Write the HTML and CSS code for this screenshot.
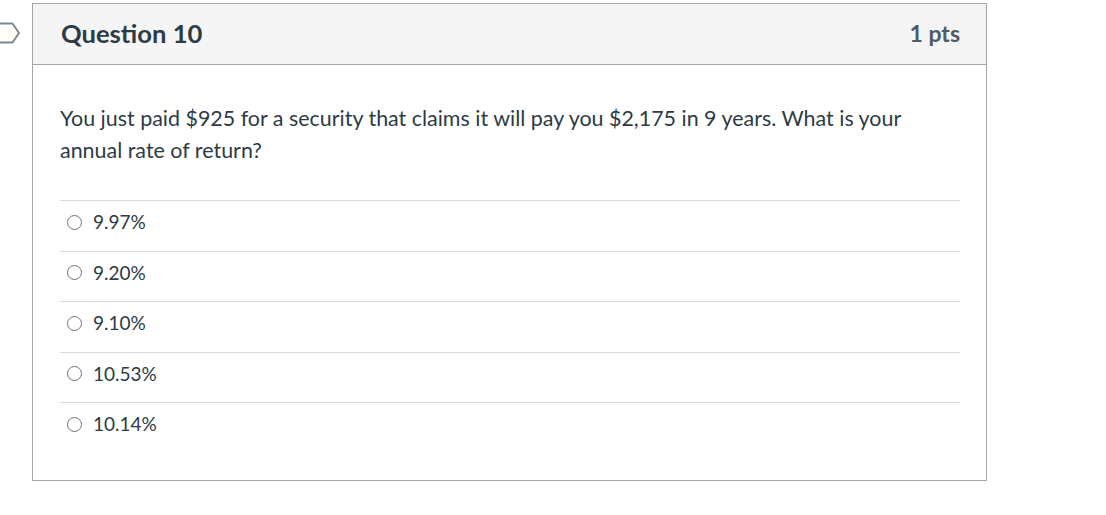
FILE: index.html
```html
<!DOCTYPE html>
<html>
<head>
<meta charset="utf-8">
<link rel="stylesheet" href="styles.css">
</head>
<body>
<div class="page">
  <svg class="flag" width="22" height="24" viewBox="0 0 22 24">
    <path d="M-4 2.5 H12.5 L19 12 L12.5 21.5 H-4" fill="#fffdf5" stroke="#7b8a92" stroke-width="2" stroke-linejoin="round"/>
  </svg>
  <div class="card">
    <div class="header">
      <h2 class="title">Question 10</h2>
      <span class="pts">1 pts</span>
    </div>
    <div class="body">
      <p class="question">You just paid $925 for a security that claims it will pay you $2,175 in 9 years. What is your annual rate of return?</p>
      <div class="answers">
        <label class="answer"><span class="radio"></span><span>9.97%</span></label>
        <label class="answer"><span class="radio"></span><span>9.20%</span></label>
        <label class="answer"><span class="radio"></span><span>9.10%</span></label>
        <label class="answer"><span class="radio"></span><span>10.53%</span></label>
        <label class="answer"><span class="radio"></span><span>10.14%</span></label>
      </div>
    </div>
  </div>
</div>
</body>
</html>
```
FILE: styles.css
```css
html, body {
  margin: 0;
  padding: 0;
  background: #fff;
}
body {
  font-family: Lato, "Liberation Sans", sans-serif;
  color: #2d3b45;
}
.page {
  position: relative;
  padding: 3px 0 0 32px;
}
.flag {
  position: absolute;
  left: 0;
  top: 21px;
}
.card {
  box-sizing: border-box;
  width: 955px;
  border: 1px solid #a5a5a5;
}
.header {
  display: flex;
  justify-content: space-between;
  align-items: center;
  background: #f5f5f5;
  border-bottom: 1px solid #a5a5a5;
  box-sizing: border-box;
  height: 61px;
  padding: 0 26px 2px 28px;
}
.title {
  margin: 0;
  font-size: 25.6px;
  font-weight: 700;
  color: #2d3b45;
}
.pts {
  font-size: 23px;
  font-weight: 700;
  color: #4f5b63;
}
.body {
  padding: 37px 26px 27px 27px;
}
.question {
  margin: 0;
  font-size: 21.45px;
  line-height: 32px;
  max-width: 870px;
}
.answers {
  margin-top: 34px;
}
.answer {
  display: flex;
  align-items: center;
  gap: 11px;
  border-top: 1px solid #dadada;
  padding: 11px 0 18.5px 7px;
  line-height: 20px;
  font-size: 19px;
  color: #2d3b45;
}
.radio {
  box-sizing: border-box;
  width: 15px;
  height: 15px;
  border: 1.5px solid #6c757c;
  border-radius: 50%;
}
```
